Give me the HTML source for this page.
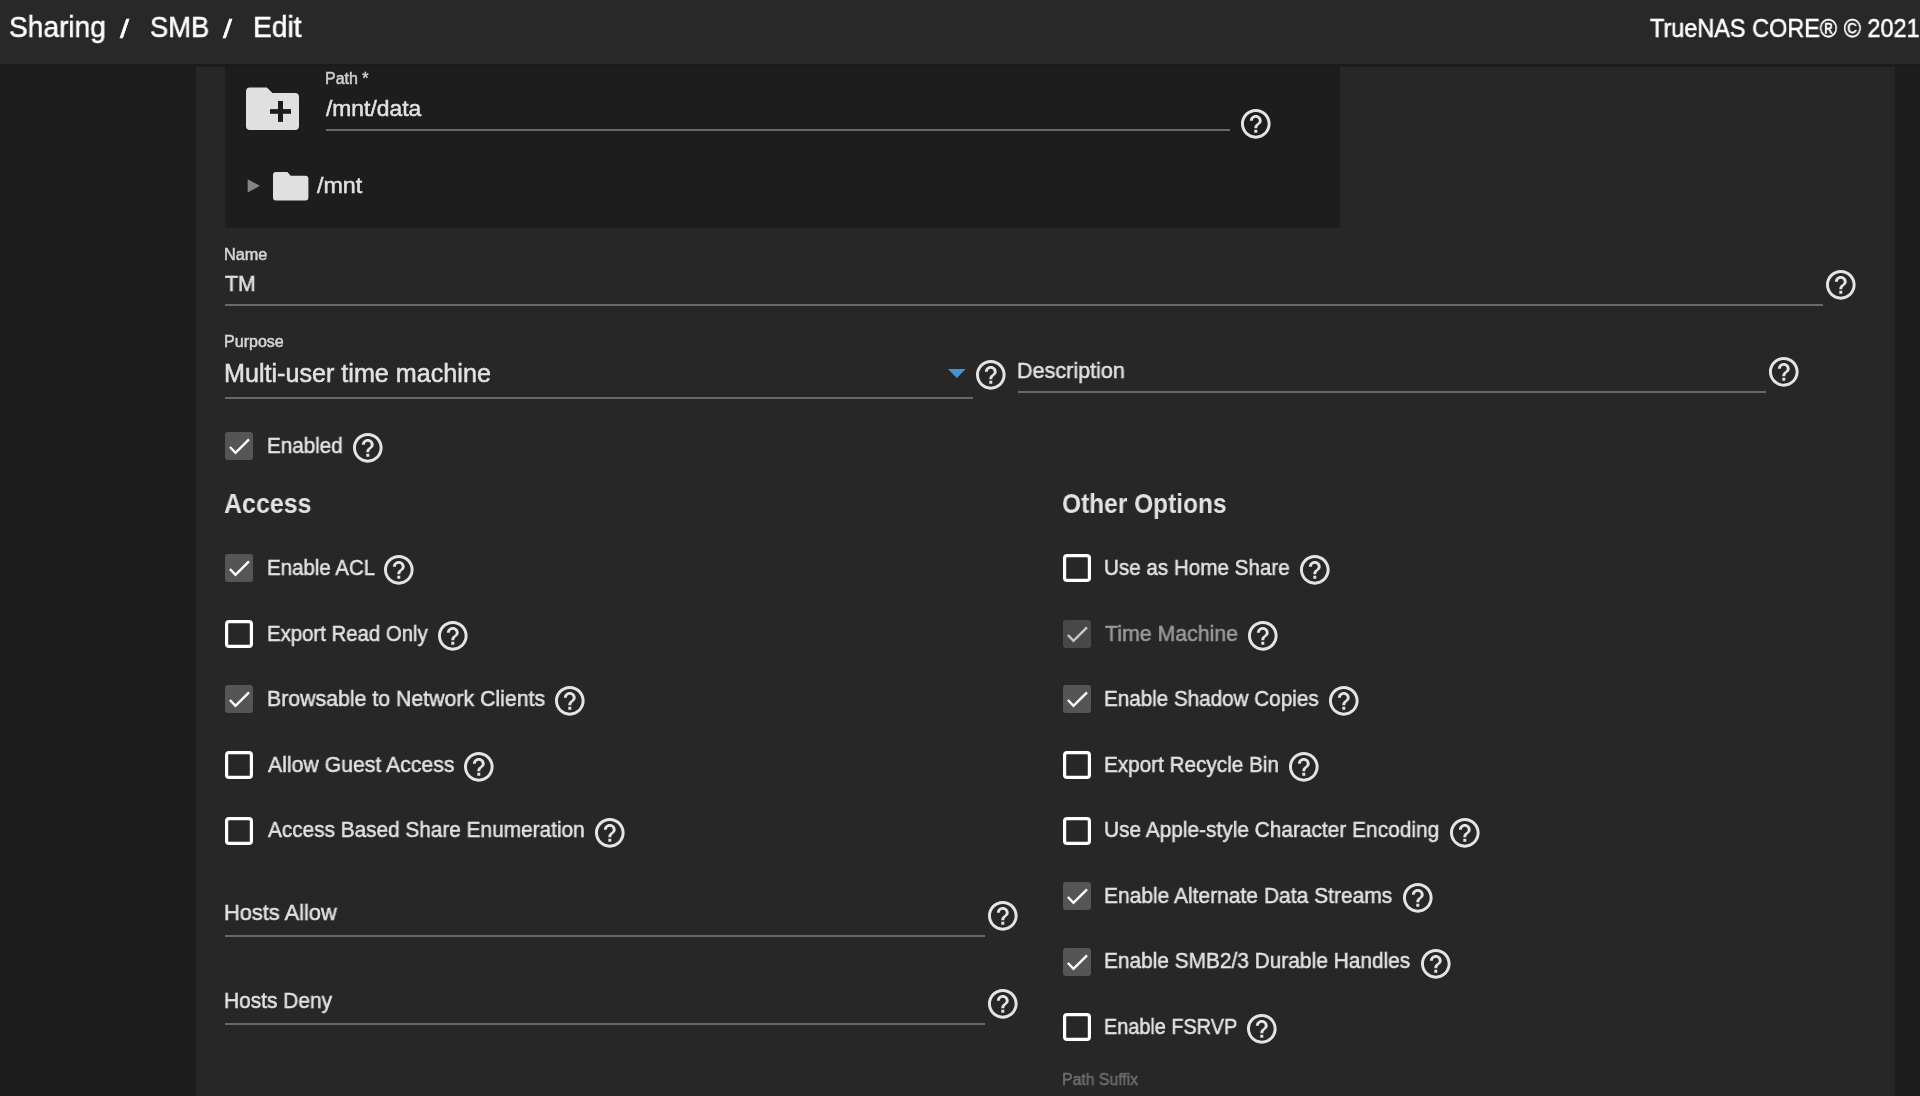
<!DOCTYPE html>
<html><head><meta charset="utf-8"><title>Sharing / SMB / Edit</title>
<style>
html,body{margin:0;padding:0;}
body{width:1920px;height:1096px;overflow:hidden;background:#1c1c1c;position:relative;font-family:"Liberation Sans",sans-serif;-webkit-font-smoothing:antialiased;}
.t{position:absolute;white-space:pre;line-height:1;transform-origin:0 0;will-change:transform;}
.hi,.cb,.ic{position:absolute;display:block;}
.ln{position:absolute;}
#top{position:absolute;left:0;top:0;width:1920px;height:64px;background:#282828;z-index:0}
#card{position:absolute;left:196px;top:67px;width:1699px;height:1040px;background:#272727;}
#rside{position:absolute;left:1895px;top:64px;width:25px;height:1040px;background:#1d1d1d;}
#shadow{position:absolute;left:0;top:64px;width:1920px;height:3px;background:linear-gradient(#1a1a1a,#1d1d1d);}
#panel{position:absolute;left:225px;top:64px;width:1115px;height:164px;background:#1d1d1d;}
</style></head><body>
<div id="top"></div>
<div class="t" style="left:9.1px;top:11.8px;font-size:30.0px;font-weight:400;transform:scaleX(0.9366);-webkit-text-stroke:0.5px #ffffff;color:#ffffff;">Sharing</div>
<div class="t" style="left:119.6px;top:15.9px;font-size:26.0px;font-weight:400;transform:scaleX(1.25);-webkit-text-stroke:0.5px #ffffff;color:#ffffff;">/</div>
<div class="t" style="left:149.7px;top:11.8px;font-size:30.0px;font-weight:400;transform:scaleX(0.9111);-webkit-text-stroke:0.5px #ffffff;color:#ffffff;">SMB</div>
<div class="t" style="left:223.0px;top:15.9px;font-size:26.0px;font-weight:400;transform:scaleX(1.25);-webkit-text-stroke:0.5px #ffffff;color:#ffffff;">/</div>
<div class="t" style="left:253.1px;top:11.8px;font-size:30.0px;font-weight:400;transform:scaleX(0.94);-webkit-text-stroke:0.5px #ffffff;color:#ffffff;">Edit</div>
<div class="t" style="left:1650.2px;top:14.6px;font-size:26.0px;font-weight:400;transform:scaleX(0.902);-webkit-text-stroke:0.5px #ffffff;color:#ffffff;">TrueNAS CORE® © 2021</div>
<div id="card"></div>
<div id="rside"></div>
<div id="panel"></div>
<div id="shadow"></div>
<svg class="ic" style="left:246px;top:87px" width="54" height="44" viewBox="0 0 54 44">
<path d="M4 0.4 H20.9 L26.4 6 H49 A4 4 0 0 1 53 10 V39 A4 4 0 0 1 49 43 H4 A4 4 0 0 1 0 39 V4.4 A4 4 0 0 1 4 0.4 Z" fill="#e0e0e0"/>
<rect x="24" y="22.1" width="21" height="4.7" fill="#1d1d1d"/><rect x="32" y="14" width="5" height="20.9" fill="#1d1d1d"/>
</svg>
<div class="t" style="left:325.0px;top:71.4px;font-size:16.0px;font-weight:400;transform:scaleX(0.9942);-webkit-text-stroke:0.5px #cfcfcf;color:#cfcfcf;">Path *</div>
<div class="t" style="left:325.6px;top:97.9px;font-size:22.5px;font-weight:400;transform:scaleX(1.0149);-webkit-text-stroke:0.5px #e2e2e2;color:#e2e2e2;">/mnt/data</div>
<div class="ln" style="left:326px;top:129px;width:904px;height:2px;background:#686868"></div>
<svg class="hi" style="left:1237.80px;top:106.30px" width="35.6" height="35.6" viewBox="0 0 24 24"><path fill="#e4e4e4" d="M11 18h2v-2h-2v2zm1-16C6.48 2 2 6.48 2 12s4.48 10 10 10 10-4.48 10-10S17.52 2 12 2zm0 18c-4.41 0-8-3.59-8-8s3.59-8 8-8 8 3.59 8 8-3.59 8-8 8zm0-14c-2.21 0-4 1.79-4 4h2c0-1.1.9-2 2-2s2 .9 2 2c0 2-3 1.75-3 5h2c0-2.25 3-2.5 3-5 0-2.21-1.79-4-4-4z"/></svg>
<svg class="ic" style="left:247px;top:179px" width="14" height="14" viewBox="0 0 14 14"><path d="M0.7 0.3 L13 6.8 L0.7 13.4 Z" fill="#858585"/></svg>
<svg class="ic" style="left:272.5px;top:171.5px" width="36" height="29" viewBox="0 0 36 29">
<path d="M3 0 H14.4 L17.7 3.7 H32.4 A3 3 0 0 1 35.4 6.7 V25.5 A3 3 0 0 1 32.4 28.5 H3 A3 3 0 0 1 0 25.5 V3 A3 3 0 0 1 3 0 Z" fill="#e0e0e0"/>
</svg>
<div class="t" style="left:316.6px;top:175.1px;font-size:22.5px;font-weight:400;transform:scaleX(1.0318);-webkit-text-stroke:0.5px #e2e2e2;color:#e2e2e2;">/mnt</div>
<div class="t" style="left:224.1px;top:247.1px;font-size:16.0px;font-weight:400;transform:scaleX(1.0146);-webkit-text-stroke:0.5px #d6d6d6;color:#d6d6d6;">Name</div>
<div class="t" style="left:225.0px;top:272.9px;font-size:22.5px;font-weight:400;transform:scaleX(0.9452);-webkit-text-stroke:0.5px #e2e2e2;color:#e2e2e2;">TM</div>
<div class="ln" style="left:225px;top:304px;width:1598px;height:2px;background:#686868"></div>
<svg class="hi" style="left:1822.70px;top:267.20px" width="35.6" height="35.6" viewBox="0 0 24 24"><path fill="#e4e4e4" d="M11 18h2v-2h-2v2zm1-16C6.48 2 2 6.48 2 12s4.48 10 10 10 10-4.48 10-10S17.52 2 12 2zm0 18c-4.41 0-8-3.59-8-8s3.59-8 8-8 8 3.59 8 8-3.59 8-8 8zm0-14c-2.21 0-4 1.79-4 4h2c0-1.1.9-2 2-2s2 .9 2 2c0 2-3 1.75-3 5h2c0-2.25 3-2.5 3-5 0-2.21-1.79-4-4-4z"/></svg>
<div class="t" style="left:224.0px;top:333.7px;font-size:16.0px;font-weight:400;transform:scaleX(1.0034);-webkit-text-stroke:0.5px #d6d6d6;color:#d6d6d6;">Purpose</div>
<div class="t" style="left:223.7px;top:361.2px;font-size:25.0px;font-weight:400;transform:scaleX(1.0057);-webkit-text-stroke:0.5px #e2e2e2;color:#e2e2e2;">Multi-user time machine</div>
<div class="ln" style="left:225px;top:397px;width:748px;height:2px;background:#686868"></div>
<svg class="ic" style="left:948.4px;top:368.9px" width="18" height="9.2" viewBox="0 0 18 9.2"><path d="M0 0 H17.7 L8.85 9.1 Z" fill="#4394d5"/></svg>
<svg class="hi" style="left:973.20px;top:357.20px" width="35.6" height="35.6" viewBox="0 0 24 24"><path fill="#e4e4e4" d="M11 18h2v-2h-2v2zm1-16C6.48 2 2 6.48 2 12s4.48 10 10 10 10-4.48 10-10S17.52 2 12 2zm0 18c-4.41 0-8-3.59-8-8s3.59-8 8-8 8 3.59 8 8-3.59 8-8 8zm0-14c-2.21 0-4 1.79-4 4h2c0-1.1.9-2 2-2s2 .9 2 2c0 2-3 1.75-3 5h2c0-2.25 3-2.5 3-5 0-2.21-1.79-4-4-4z"/></svg>
<div class="t" style="left:1017.0px;top:359.8px;font-size:22.5px;font-weight:400;transform:scaleX(0.9586);-webkit-text-stroke:0.5px #e2e2e2;color:#e2e2e2;">Description</div>
<div class="ln" style="left:1018px;top:391px;width:748px;height:2px;background:#686868"></div>
<svg class="hi" style="left:1765.70px;top:353.90px" width="35.6" height="35.6" viewBox="0 0 24 24"><path fill="#e4e4e4" d="M11 18h2v-2h-2v2zm1-16C6.48 2 2 6.48 2 12s4.48 10 10 10 10-4.48 10-10S17.52 2 12 2zm0 18c-4.41 0-8-3.59-8-8s3.59-8 8-8 8 3.59 8 8-3.59 8-8 8zm0-14c-2.21 0-4 1.79-4 4h2c0-1.1.9-2 2-2s2 .9 2 2c0 2-3 1.75-3 5h2c0-2.25 3-2.5 3-5 0-2.21-1.79-4-4-4z"/></svg>
<svg class="cb" style="left:224.8px;top:432px" width="28" height="28" viewBox="0 0 28 28"><rect x="0" y="0" width="28" height="28" rx="3" fill="#555555"/><path d="M4.9 15.0 L10.5 20.8 L24.0 7.4" fill="none" stroke="#ffffff" stroke-width="2.45"/></svg>
<div class="t" style="left:266.8px;top:435.0px;font-size:22.5px;font-weight:400;transform:scaleX(0.9173);-webkit-text-stroke:0.5px #e2e2e2;color:#e2e2e2;">Enabled</div>
<svg class="hi" style="left:349.50px;top:429.70px" width="35.6" height="35.6" viewBox="0 0 24 24"><path fill="#e4e4e4" d="M11 18h2v-2h-2v2zm1-16C6.48 2 2 6.48 2 12s4.48 10 10 10 10-4.48 10-10S17.52 2 12 2zm0 18c-4.41 0-8-3.59-8-8s3.59-8 8-8 8 3.59 8 8-3.59 8-8 8zm0-14c-2.21 0-4 1.79-4 4h2c0-1.1.9-2 2-2s2 .9 2 2c0 2-3 1.75-3 5h2c0-2.25 3-2.5 3-5 0-2.21-1.79-4-4-4z"/></svg>
<div class="t" style="left:223.8px;top:490.1px;font-size:27.5px;font-weight:700;transform:scaleX(0.9079);-webkit-text-stroke:0px #e2e2e2;color:#e2e2e2;">Access</div>
<div class="t" style="left:1061.9px;top:490.1px;font-size:27.5px;font-weight:700;transform:scaleX(0.8902);-webkit-text-stroke:0px #e2e2e2;color:#e2e2e2;">Other Options</div>
<svg class="cb" style="left:224.8px;top:554.1px" width="28" height="28" viewBox="0 0 28 28"><rect x="0" y="0" width="28" height="28" rx="3" fill="#555555"/><path d="M4.9 15.0 L10.5 20.8 L24.0 7.4" fill="none" stroke="#ffffff" stroke-width="2.45"/></svg>
<div class="t" style="left:267.1px;top:557.2px;font-size:22.5px;font-weight:400;transform:scaleX(0.9103);-webkit-text-stroke:0.5px #e2e2e2;color:#e2e2e2;">Enable ACL</div>
<svg class="hi" style="left:381.45px;top:552.20px" width="35.6" height="35.6" viewBox="0 0 24 24"><path fill="#e4e4e4" d="M11 18h2v-2h-2v2zm1-16C6.48 2 2 6.48 2 12s4.48 10 10 10 10-4.48 10-10S17.52 2 12 2zm0 18c-4.41 0-8-3.59-8-8s3.59-8 8-8 8 3.59 8 8-3.59 8-8 8zm0-14c-2.21 0-4 1.79-4 4h2c0-1.1.9-2 2-2s2 .9 2 2c0 2-3 1.75-3 5h2c0-2.25 3-2.5 3-5 0-2.21-1.79-4-4-4z"/></svg>
<svg class="cb" style="left:224.8px;top:619.7px" width="28" height="28" viewBox="0 0 28 28"><rect x="1.6" y="1.6" width="24.8" height="24.8" rx="2.5" fill="none" stroke="#ffffff" stroke-width="3.2"/></svg>
<div class="t" style="left:267.1px;top:622.7px;font-size:22.5px;font-weight:400;transform:scaleX(0.9056);-webkit-text-stroke:0.5px #e2e2e2;color:#e2e2e2;">Export Read Only</div>
<svg class="hi" style="left:435.30px;top:617.80px" width="35.6" height="35.6" viewBox="0 0 24 24"><path fill="#e4e4e4" d="M11 18h2v-2h-2v2zm1-16C6.48 2 2 6.48 2 12s4.48 10 10 10 10-4.48 10-10S17.52 2 12 2zm0 18c-4.41 0-8-3.59-8-8s3.59-8 8-8 8 3.59 8 8-3.59 8-8 8zm0-14c-2.21 0-4 1.79-4 4h2c0-1.1.9-2 2-2s2 .9 2 2c0 2-3 1.75-3 5h2c0-2.25 3-2.5 3-5 0-2.21-1.79-4-4-4z"/></svg>
<svg class="cb" style="left:224.8px;top:685.3px" width="28" height="28" viewBox="0 0 28 28"><rect x="0" y="0" width="28" height="28" rx="3" fill="#555555"/><path d="M4.9 15.0 L10.5 20.8 L24.0 7.4" fill="none" stroke="#ffffff" stroke-width="2.45"/></svg>
<div class="t" style="left:267.1px;top:688.2px;font-size:22.5px;font-weight:400;transform:scaleX(0.9469);-webkit-text-stroke:0.5px #e2e2e2;color:#e2e2e2;">Browsable to Network Clients</div>
<svg class="hi" style="left:551.55px;top:683.40px" width="35.6" height="35.6" viewBox="0 0 24 24"><path fill="#e4e4e4" d="M11 18h2v-2h-2v2zm1-16C6.48 2 2 6.48 2 12s4.48 10 10 10 10-4.48 10-10S17.52 2 12 2zm0 18c-4.41 0-8-3.59-8-8s3.59-8 8-8 8 3.59 8 8-3.59 8-8 8zm0-14c-2.21 0-4 1.79-4 4h2c0-1.1.9-2 2-2s2 .9 2 2c0 2-3 1.75-3 5h2c0-2.25 3-2.5 3-5 0-2.21-1.79-4-4-4z"/></svg>
<svg class="cb" style="left:224.8px;top:750.9px" width="28" height="28" viewBox="0 0 28 28"><rect x="1.6" y="1.6" width="24.8" height="24.8" rx="2.5" fill="none" stroke="#ffffff" stroke-width="3.2"/></svg>
<div class="t" style="left:268.0px;top:753.7px;font-size:22.5px;font-weight:400;transform:scaleX(0.9442);-webkit-text-stroke:0.5px #e2e2e2;color:#e2e2e2;">Allow Guest Access</div>
<svg class="hi" style="left:461.05px;top:749.00px" width="35.6" height="35.6" viewBox="0 0 24 24"><path fill="#e4e4e4" d="M11 18h2v-2h-2v2zm1-16C6.48 2 2 6.48 2 12s4.48 10 10 10 10-4.48 10-10S17.52 2 12 2zm0 18c-4.41 0-8-3.59-8-8s3.59-8 8-8 8 3.59 8 8-3.59 8-8 8zm0-14c-2.21 0-4 1.79-4 4h2c0-1.1.9-2 2-2s2 .9 2 2c0 2-3 1.75-3 5h2c0-2.25 3-2.5 3-5 0-2.21-1.79-4-4-4z"/></svg>
<svg class="cb" style="left:224.8px;top:816.5px" width="28" height="28" viewBox="0 0 28 28"><rect x="1.6" y="1.6" width="24.8" height="24.8" rx="2.5" fill="none" stroke="#ffffff" stroke-width="3.2"/></svg>
<div class="t" style="left:268.0px;top:819.2px;font-size:22.5px;font-weight:400;transform:scaleX(0.9237);-webkit-text-stroke:0.5px #e2e2e2;color:#e2e2e2;">Access Based Share Enumeration</div>
<svg class="hi" style="left:591.70px;top:814.60px" width="35.6" height="35.6" viewBox="0 0 24 24"><path fill="#e4e4e4" d="M11 18h2v-2h-2v2zm1-16C6.48 2 2 6.48 2 12s4.48 10 10 10 10-4.48 10-10S17.52 2 12 2zm0 18c-4.41 0-8-3.59-8-8s3.59-8 8-8 8 3.59 8 8-3.59 8-8 8zm0-14c-2.21 0-4 1.79-4 4h2c0-1.1.9-2 2-2s2 .9 2 2c0 2-3 1.75-3 5h2c0-2.25 3-2.5 3-5 0-2.21-1.79-4-4-4z"/></svg>
<svg class="cb" style="left:1062.8px;top:554.1px" width="28" height="28" viewBox="0 0 28 28"><rect x="1.6" y="1.6" width="24.8" height="24.8" rx="2.5" fill="none" stroke="#ffffff" stroke-width="3.2"/></svg>
<div class="t" style="left:1104.3px;top:557.2px;font-size:22.5px;font-weight:400;transform:scaleX(0.9169);-webkit-text-stroke:0.5px #e2e2e2;color:#e2e2e2;">Use as Home Share</div>
<svg class="hi" style="left:1296.70px;top:552.20px" width="35.6" height="35.6" viewBox="0 0 24 24"><path fill="#e4e4e4" d="M11 18h2v-2h-2v2zm1-16C6.48 2 2 6.48 2 12s4.48 10 10 10 10-4.48 10-10S17.52 2 12 2zm0 18c-4.41 0-8-3.59-8-8s3.59-8 8-8 8 3.59 8 8-3.59 8-8 8zm0-14c-2.21 0-4 1.79-4 4h2c0-1.1.9-2 2-2s2 .9 2 2c0 2-3 1.75-3 5h2c0-2.25 3-2.5 3-5 0-2.21-1.79-4-4-4z"/></svg>
<svg class="cb" style="left:1062.8px;top:619.7px" width="28" height="28" viewBox="0 0 28 28"><rect x="0" y="0" width="28" height="28" rx="3" fill="#484848"/><path d="M4.9 15.0 L10.5 20.8 L24.0 7.4" fill="none" stroke="#c8c8c8" stroke-width="2.45"/></svg>
<div class="t" style="left:1105.2px;top:622.7px;font-size:22.5px;font-weight:400;transform:scaleX(0.9464);-webkit-text-stroke:0.5px #9a9a9a;color:#9a9a9a;">Time Machine</div>
<svg class="hi" style="left:1245.10px;top:617.80px" width="35.6" height="35.6" viewBox="0 0 24 24"><path fill="#e4e4e4" d="M11 18h2v-2h-2v2zm1-16C6.48 2 2 6.48 2 12s4.48 10 10 10 10-4.48 10-10S17.52 2 12 2zm0 18c-4.41 0-8-3.59-8-8s3.59-8 8-8 8 3.59 8 8-3.59 8-8 8zm0-14c-2.21 0-4 1.79-4 4h2c0-1.1.9-2 2-2s2 .9 2 2c0 2-3 1.75-3 5h2c0-2.25 3-2.5 3-5 0-2.21-1.79-4-4-4z"/></svg>
<svg class="cb" style="left:1062.8px;top:685.3px" width="28" height="28" viewBox="0 0 28 28"><rect x="0" y="0" width="28" height="28" rx="3" fill="#555555"/><path d="M4.9 15.0 L10.5 20.8 L24.0 7.4" fill="none" stroke="#ffffff" stroke-width="2.45"/></svg>
<div class="t" style="left:1104.3px;top:688.2px;font-size:22.5px;font-weight:400;transform:scaleX(0.9172);-webkit-text-stroke:0.5px #e2e2e2;color:#e2e2e2;">Enable Shadow Copies</div>
<svg class="hi" style="left:1326.20px;top:683.40px" width="35.6" height="35.6" viewBox="0 0 24 24"><path fill="#e4e4e4" d="M11 18h2v-2h-2v2zm1-16C6.48 2 2 6.48 2 12s4.48 10 10 10 10-4.48 10-10S17.52 2 12 2zm0 18c-4.41 0-8-3.59-8-8s3.59-8 8-8 8 3.59 8 8-3.59 8-8 8zm0-14c-2.21 0-4 1.79-4 4h2c0-1.1.9-2 2-2s2 .9 2 2c0 2-3 1.75-3 5h2c0-2.25 3-2.5 3-5 0-2.21-1.79-4-4-4z"/></svg>
<svg class="cb" style="left:1062.8px;top:750.9px" width="28" height="28" viewBox="0 0 28 28"><rect x="1.6" y="1.6" width="24.8" height="24.8" rx="2.5" fill="none" stroke="#ffffff" stroke-width="3.2"/></svg>
<div class="t" style="left:1104.3px;top:753.7px;font-size:22.5px;font-weight:400;transform:scaleX(0.9207);-webkit-text-stroke:0.5px #e2e2e2;color:#e2e2e2;">Export Recycle Bin</div>
<svg class="hi" style="left:1286.20px;top:749.00px" width="35.6" height="35.6" viewBox="0 0 24 24"><path fill="#e4e4e4" d="M11 18h2v-2h-2v2zm1-16C6.48 2 2 6.48 2 12s4.48 10 10 10 10-4.48 10-10S17.52 2 12 2zm0 18c-4.41 0-8-3.59-8-8s3.59-8 8-8 8 3.59 8 8-3.59 8-8 8zm0-14c-2.21 0-4 1.79-4 4h2c0-1.1.9-2 2-2s2 .9 2 2c0 2-3 1.75-3 5h2c0-2.25 3-2.5 3-5 0-2.21-1.79-4-4-4z"/></svg>
<svg class="cb" style="left:1062.8px;top:816.5px" width="28" height="28" viewBox="0 0 28 28"><rect x="1.6" y="1.6" width="24.8" height="24.8" rx="2.5" fill="none" stroke="#ffffff" stroke-width="3.2"/></svg>
<div class="t" style="left:1104.3px;top:819.2px;font-size:22.5px;font-weight:400;transform:scaleX(0.9272);-webkit-text-stroke:0.5px #e2e2e2;color:#e2e2e2;">Use Apple-style Character Encoding</div>
<svg class="hi" style="left:1446.50px;top:814.60px" width="35.6" height="35.6" viewBox="0 0 24 24"><path fill="#e4e4e4" d="M11 18h2v-2h-2v2zm1-16C6.48 2 2 6.48 2 12s4.48 10 10 10 10-4.48 10-10S17.52 2 12 2zm0 18c-4.41 0-8-3.59-8-8s3.59-8 8-8 8 3.59 8 8-3.59 8-8 8zm0-14c-2.21 0-4 1.79-4 4h2c0-1.1.9-2 2-2s2 .9 2 2c0 2-3 1.75-3 5h2c0-2.25 3-2.5 3-5 0-2.21-1.79-4-4-4z"/></svg>
<svg class="cb" style="left:1062.8px;top:882.1px" width="28" height="28" viewBox="0 0 28 28"><rect x="0" y="0" width="28" height="28" rx="3" fill="#555555"/><path d="M4.9 15.0 L10.5 20.8 L24.0 7.4" fill="none" stroke="#ffffff" stroke-width="2.45"/></svg>
<div class="t" style="left:1104.3px;top:884.7px;font-size:22.5px;font-weight:400;transform:scaleX(0.9328);-webkit-text-stroke:0.5px #e2e2e2;color:#e2e2e2;">Enable Alternate Data Streams</div>
<svg class="hi" style="left:1399.80px;top:880.20px" width="35.6" height="35.6" viewBox="0 0 24 24"><path fill="#e4e4e4" d="M11 18h2v-2h-2v2zm1-16C6.48 2 2 6.48 2 12s4.48 10 10 10 10-4.48 10-10S17.52 2 12 2zm0 18c-4.41 0-8-3.59-8-8s3.59-8 8-8 8 3.59 8 8-3.59 8-8 8zm0-14c-2.21 0-4 1.79-4 4h2c0-1.1.9-2 2-2s2 .9 2 2c0 2-3 1.75-3 5h2c0-2.25 3-2.5 3-5 0-2.21-1.79-4-4-4z"/></svg>
<svg class="cb" style="left:1062.8px;top:947.7px" width="28" height="28" viewBox="0 0 28 28"><rect x="0" y="0" width="28" height="28" rx="3" fill="#555555"/><path d="M4.9 15.0 L10.5 20.8 L24.0 7.4" fill="none" stroke="#ffffff" stroke-width="2.45"/></svg>
<div class="t" style="left:1104.3px;top:950.2px;font-size:22.5px;font-weight:400;transform:scaleX(0.9271);-webkit-text-stroke:0.5px #e2e2e2;color:#e2e2e2;">Enable SMB2/3 Durable Handles</div>
<svg class="hi" style="left:1417.60px;top:945.80px" width="35.6" height="35.6" viewBox="0 0 24 24"><path fill="#e4e4e4" d="M11 18h2v-2h-2v2zm1-16C6.48 2 2 6.48 2 12s4.48 10 10 10 10-4.48 10-10S17.52 2 12 2zm0 18c-4.41 0-8-3.59-8-8s3.59-8 8-8 8 3.59 8 8-3.59 8-8 8zm0-14c-2.21 0-4 1.79-4 4h2c0-1.1.9-2 2-2s2 .9 2 2c0 2-3 1.75-3 5h2c0-2.25 3-2.5 3-5 0-2.21-1.79-4-4-4z"/></svg>
<svg class="cb" style="left:1062.8px;top:1013.3px" width="28" height="28" viewBox="0 0 28 28"><rect x="1.6" y="1.6" width="24.8" height="24.8" rx="2.5" fill="none" stroke="#ffffff" stroke-width="3.2"/></svg>
<div class="t" style="left:1104.3px;top:1015.7px;font-size:22.5px;font-weight:400;transform:scaleX(0.8826);-webkit-text-stroke:0.5px #e2e2e2;color:#e2e2e2;">Enable FSRVP</div>
<svg class="hi" style="left:1244.10px;top:1011.40px" width="35.6" height="35.6" viewBox="0 0 24 24"><path fill="#e4e4e4" d="M11 18h2v-2h-2v2zm1-16C6.48 2 2 6.48 2 12s4.48 10 10 10 10-4.48 10-10S17.52 2 12 2zm0 18c-4.41 0-8-3.59-8-8s3.59-8 8-8 8 3.59 8 8-3.59 8-8 8zm0-14c-2.21 0-4 1.79-4 4h2c0-1.1.9-2 2-2s2 .9 2 2c0 2-3 1.75-3 5h2c0-2.25 3-2.5 3-5 0-2.21-1.79-4-4-4z"/></svg>
<div class="t" style="left:224.0px;top:901.6px;font-size:22.5px;font-weight:400;transform:scaleX(0.9698);-webkit-text-stroke:0.5px #e2e2e2;color:#e2e2e2;">Hosts Allow</div>
<div class="ln" style="left:225px;top:935px;width:760px;height:2px;background:#686868"></div>
<svg class="hi" style="left:984.60px;top:897.60px" width="35.6" height="35.6" viewBox="0 0 24 24"><path fill="#e4e4e4" d="M11 18h2v-2h-2v2zm1-16C6.48 2 2 6.48 2 12s4.48 10 10 10 10-4.48 10-10S17.52 2 12 2zm0 18c-4.41 0-8-3.59-8-8s3.59-8 8-8 8 3.59 8 8-3.59 8-8 8zm0-14c-2.21 0-4 1.79-4 4h2c0-1.1.9-2 2-2s2 .9 2 2c0 2-3 1.75-3 5h2c0-2.25 3-2.5 3-5 0-2.21-1.79-4-4-4z"/></svg>
<div class="t" style="left:224.1px;top:990.4px;font-size:22.5px;font-weight:400;transform:scaleX(0.9293);-webkit-text-stroke:0.5px #e2e2e2;color:#e2e2e2;">Hosts Deny</div>
<div class="ln" style="left:225px;top:1023px;width:760px;height:2px;background:#686868"></div>
<svg class="hi" style="left:984.60px;top:986.20px" width="35.6" height="35.6" viewBox="0 0 24 24"><path fill="#e4e4e4" d="M11 18h2v-2h-2v2zm1-16C6.48 2 2 6.48 2 12s4.48 10 10 10 10-4.48 10-10S17.52 2 12 2zm0 18c-4.41 0-8-3.59-8-8s3.59-8 8-8 8 3.59 8 8-3.59 8-8 8zm0-14c-2.21 0-4 1.79-4 4h2c0-1.1.9-2 2-2s2 .9 2 2c0 2-3 1.75-3 5h2c0-2.25 3-2.5 3-5 0-2.21-1.79-4-4-4z"/></svg>
<div class="t" style="left:1061.7px;top:1072.4px;font-size:16.0px;font-weight:400;transform:scaleX(0.9882);-webkit-text-stroke:0.5px #6e6e6e;color:#6e6e6e;">Path Suffix</div>
<svg class="hi" style="left:1821.70px;top:1093.70px" width="35.6" height="35.6" viewBox="0 0 24 24"><path fill="#e4e4e4" d="M11 18h2v-2h-2v2zm1-16C6.48 2 2 6.48 2 12s4.48 10 10 10 10-4.48 10-10S17.52 2 12 2zm0 18c-4.41 0-8-3.59-8-8s3.59-8 8-8 8 3.59 8 8-3.59 8-8 8zm0-14c-2.21 0-4 1.79-4 4h2c0-1.1.9-2 2-2s2 .9 2 2c0 2-3 1.75-3 5h2c0-2.25 3-2.5 3-5 0-2.21-1.79-4-4-4z"/></svg>
</body></html>
